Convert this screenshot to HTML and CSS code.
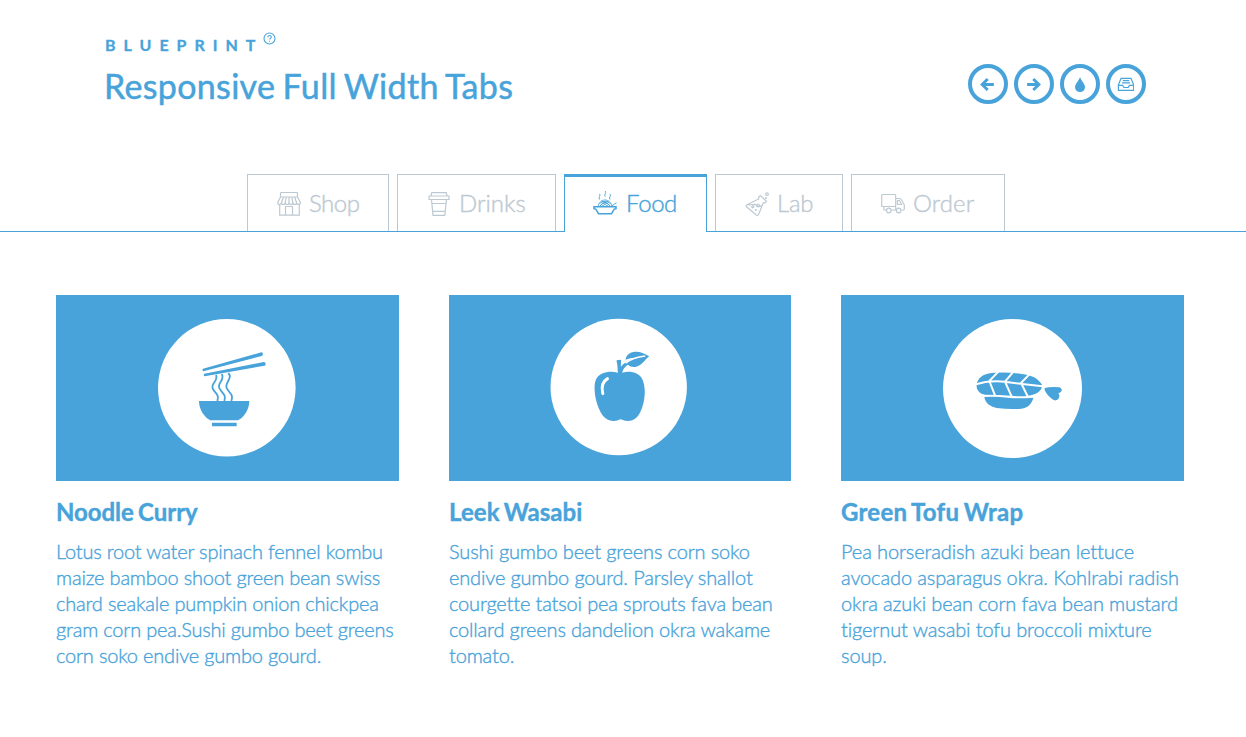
FILE: index.html
```html
<!DOCTYPE html>
<html lang="en">
<head>
<meta charset="utf-8">
<title>Responsive Full Width Tabs</title>
<link rel="stylesheet" href="styles.css">
</head>
<body>
<header class="header">
  <div class="titles">
    <div class="brand"><span>Blueprint</span><svg class="help" viewBox="0 0 13 13"><circle cx="6.5" cy="6.5" r="5.5"/><path d="M4.8 5.2c0-2.3 3.6-2.2 3.5-.1 0 1.2-1.7 1.3-1.7 2.5M6.6 8.7v1"/></svg></div>
    <h1>Responsive Full Width Tabs</h1>
  </div>
  <nav class="actions">
    <a class="round"><svg viewBox="0 0 16 16"><path class="thick" d="M14 8H3.5M8.2 2.800 3 8l5.200 5.200"/></svg></a>
    <a class="round"><svg viewBox="0 0 16 16"><path class="thick" d="M2 8h10.500M7.800 2.800 13 8l-5.200 5.200"/></svg></a>
    <a class="round"><svg viewBox="0 0 16 16"><path class="solid" d="M8.500 1c1 3.500 4.700 6.500 4.700 9.600a4.700 4.500 0 0 1-9.400 0C3.800 7.500 7.500 4.500 8.500 1z"/></svg></a>
    <a class="round"><svg viewBox="0 0 16 16"><path class="thin" d="M1.300 8.500 3.800 2.200h9.400L15.700 8.500v5.100H1.300zM1.300 8.800h4l1.200 2h4l1.200-2h4M5.500 4.400h6M4.800 6.500h7.400"/></svg></a>
  </nav>
</header>

<nav class="tabs">
  <a class="tab shop"><svg viewBox="0 0 24 24"><path d="M3.500 5V1.500Q3.500.5 4.500.5h15q1 0 1 1V5zM3.500 5 .7 10.500q0 2 1.700 2t2-2q0 2 1.900 2t1.900-2q0 2 1.900 2t1.900-2q0 2 1.900 2t1.900-2q0 2 1.900 2t1.900-2q0 2 1.900 2t1.900-2L20.500 5M6.500 5l-2 5.500M9.300 5l-1.100 5.500M12 5v5.500M14.700 5l1.100 5.500M17.500 5l2.100 5.500M2.700 12.500v10.700h19.600V12.500M8.500 23v-8.500h7V23"/></svg><span>Shop</span></a>
  <a class="tab drinks"><svg viewBox="0 0 24 24"><path d="M4 4 4.800.7h14.400L20 4M2 4h20v3.500H2zM4.500 7.500 6 23.300h11.800L19.500 7.500M5 11.500h14M5.600 19.300h12.600"/></svg><span>Drinks</span></a>
  <a class="tab food active"><svg viewBox="0 0 24 24"><path class="bowl" d="M1 15.700h22v2l-1.800.4-2.700 4.600h-13L2.800 18.100 1 17.700z"/><path class="fine" d="M5 15.500c1-4.200 3.500-6.500 7-6.500s6 2.300 7 6.500M7 15q5-6 10 0M9 15q3-3 6 0M6.500 12.500q5.500-4 11 0M8.500 10.200q6 1 9 5M15.500 10.200q-6 1-9 5M18.500 15l5-3.300M6.500 8.500q-1-1.500 0-3t0-2.500M12.200 5.800q-1-1.500 0-3T12.200 0M17 8.500q-1-1.500 0-3t0-2.500"/></svg><span>Food</span></a>
  <a class="tab lab"><svg viewBox="0 0 24 24"><path d="M13.500 5.500 15.300 3.500 21.500 9.300 19.700 11 18.300 10.700 13.600 22.500Q12.800 24 11.300 23L1.500 14.800Q.4 13.300 2 12.700L13.700 7zM3 13l7-.7 3.500 2.200 3.500-.8"/><circle cx="22" cy="2.200" r="1.300"/><circle cx="21" cy="6" r=".4"/><circle cx="7.800" cy="14.800" r="1"/><circle cx="13" cy="13.500" r="1.500"/><circle cx="10.800" cy="18" r=".5"/></svg><span>Lab</span></a>
  <a class="tab order"><svg viewBox="0 0 24 24"><path d="M5 18H3v-3.500M1.700 2.500h12q1 0 1 1v10q0 1-1 1h-12q-1 0-1-1v-10q0-1 1-1zM14.700 6.500h4q1.200 0 1.800 1.300l2 3.700.8 1.500v4q0 1-1.200 1h-1.500M10.500 18h4.800M14.700 14.500V18M16.500 8.500h2l2 4h-4z"/><circle cx="7.800" cy="18.500" r="2.300"/><circle cx="17.700" cy="18.500" r="2.300"/></svg><span>Order</span></a>
</nav>

<main class="cards">
  <article class="card noodle">
    <svg class="cover" viewBox="0 0 343 186">
      <circle class="disc" cx="170.800" cy="92.800" r="68.800"/>
      <g transform="translate(94 15) scale(.33333)">
        <path class="ink" d="M159 176 334 127Q339 127 339 132T335 138L160 184Q155 181 159 176zM163 191 341 156Q347 156 347 162T343 167L164 199Q159 196 163 191zM147 273H298C298 299 281 323 264 331H181C163 321 147 299 147 273zM186 338H260V349H186z"/>
        <path class="strand" d="M198 195C206 212 182 220 188 235S209 252 202 273M215 192C227 208 201 218 208 234S230 252 223 273M235 189C250 205 223 218 230 234S252 252 244 273"/>
      </g>
    </svg>
    <h2>Noodle Curry</h2>
    <p>Lotus root water spinach fennel kombu<br>maize bamboo shoot green bean swiss<br>chard seakale pumpkin onion chickpea<br>gram corn pea.Sushi gumbo beet greens<br>corn soko endive gumbo gourd.</p>
  </article>
  <article class="card leek">
    <svg class="cover" viewBox="0 0 342 186">
      <circle class="disc" cx="169.700" cy="92" r="68.200"/>
      <g transform="translate(94.500 15) scale(.33333)">
        <path class="ink" d="M223 188Q223 168 219 151L233 149Q232 160 232 170Q247 151 278 143Q258 143 246 149C251 120 288 118 317 139C303 150 295 168 276 171Q262 173 253 164Q239 173 236 188C260 181 282 187 293 202C309 225 307 275 289 309C278 331 257 338 236 329Q230 326 224 331C198 338 180 324 171 306C154 274 148 227 158 207C169 187 198 182 223 188z"/>
        <path class="leaf-vein" d="M246 160Q267 142 305 138"/>
        <path class="shine" d="M192 206Q170 219 178 251"/>
      </g>
    </svg>
    <h2>Leek Wasabi</h2>
    <p>Sushi gumbo beet greens corn soko<br>endive gumbo gourd. Parsley shallot<br>courgette tatsoi pea sprouts fava bean<br>collard greens dandelion okra wakame<br>tomato.</p>
  </article>
  <article class="card tofu">
    <svg class="cover" viewBox="0 0 343 186">
      <circle class="disc" cx="171.500" cy="93.500" r="69.500"/>
      <g transform="translate(94 15) scale(.33333)">
        <path class="ink" d="M126 219C132 197 153 189 180 188Q225 186 260 192C290 195 309 205 321 224Q323 235 313 244C300 257 270 261 240 258Q190 254 151 254C131 252 121 235 126 219zM148 261Q184 259 218 263T295 263C291 281 279 293 259 296Q225 299 185 294C164 289 151 279 148 261zM329 234Q348 229 374 232C386 239 379 248 370 250C378 259 369 273 358 271Q340 262 329 241z"/>
        <path class="cuts" d="M120 224Q165 209 215 216T323 229M191 184 163 213 180 256M236 184 210 215 230 260M286 190 258 219 279 261"/>
      </g>
    </svg>
    <h2>Green Tofu Wrap</h2>
    <p>Pea horseradish azuki bean lettuce<br>avocado asparagus okra. Kohlrabi radish<br>okra azuki bean corn fava bean mustard<br>tigernut wasabi tofu broccoli mixture<br>soup.</p>
  </article>
</main>
</body>
</html>
```
FILE: styles.css
```css
* { box-sizing: border-box; }
body { margin: 0; background: #fff; color: #47a3da; font-family: Lato, sans-serif; height: 737px; overflow: hidden; }
svg { display: block; fill: none; stroke: currentColor; }
.header { height: 174px; padding: 32px 100px 0 105px; display: flex; justify-content: space-between; }
.brand { display: flex; height: 26px; font-size: 16px; line-height: 26px; font-weight: 700; letter-spacing: 8px; text-transform: uppercase; -webkit-text-stroke: .3px; }
.help { width: 13px; height: 13px; stroke-width: 1.1; }
h1 { margin: 6px 0 0; font-size: 34px; line-height: 44px; font-weight: 400; letter-spacing: .32px; word-spacing: -1.7px; text-indent: -1px; white-space: nowrap; -webkit-text-stroke: .5px; }
.actions { display: flex; gap: 6px; padding-top: 32px; }
.round { width: 40px; height: 40px; border: 4px solid; border-radius: 50%; display: grid; place-items: center; }
.round svg { width: 17px; height: 17px; margin-right: 1px; }
.thick { stroke-width: 2.8; }
.thin { stroke-width: 1.1; }
.solid { fill: currentColor; stroke: none; }
.tabs { height: 58px; display: flex; gap: 8px; padding-left: 247px; border-bottom: 1px solid #47a3da; }
.tab { height: 57px; border: 1px solid #bdc9d2; border-bottom: 0; color: #bdc9d2; display: flex; padding: 16px 0 0 29px; font-size: 24px; line-height: 24px; font-weight: 300; white-space: nowrap; -webkit-text-stroke: .4px; }
.tab svg { width: 24px; height: 24px; margin: 1px 8px 0 0; stroke-width: 1.2; flex: none; }
.tab .fine { stroke-width: .9; }
.tab .bowl { stroke-width: 1.5; }
.shop { width: 142px; letter-spacing: -.5px; }
.drinks { width: 159px; }
.food { width: 143px; letter-spacing: -.4px; }
.lab { width: 128px; letter-spacing: -.2px; }
.order { width: 154px; letter-spacing: .1px; }
.active { height: 58px; border-color: #47a3da; border-top-width: 3px; padding: 14px 0 0 28px; color: #47a3da; background: #fff; }
.tab.active svg { margin: 0 9px 0 0; }
.cards { display: grid; grid-template-columns: 343px 342px 343px; column-gap: 50px; padding: 63px 0 0 56px; }
.cover { width: 100%; height: 186px; background: #47a3da; stroke: none; }
.disc { fill: #fff; }
.ink { fill: #47a3da; }
.strand { stroke: #47a3da; stroke-width: 5.500; }
.leaf-vein { stroke: #fff; stroke-width: 4; }
.shine { stroke: #fff; stroke-width: 9; stroke-linecap: round; }
.cuts { stroke: #fff; stroke-width: 6; }
h2 { margin: 15px 0 0; font-size: 24px; line-height: 31px; font-weight: 700; word-spacing: -1.5px; -webkit-text-stroke: .4px; }
p { margin: 11px 0 0; font-size: 20px; line-height: 26px; font-weight: 300; white-space: nowrap; -webkit-text-stroke: .35px; }
.noodle p { letter-spacing: -.2px; }
.noodle h2 { letter-spacing: -.05px; }
.leek p { letter-spacing: -.16px; }
.leek h2 { letter-spacing: .05px; }
.tofu p { letter-spacing: -.12px; }
.tofu h2 { letter-spacing: .25px; }
```
